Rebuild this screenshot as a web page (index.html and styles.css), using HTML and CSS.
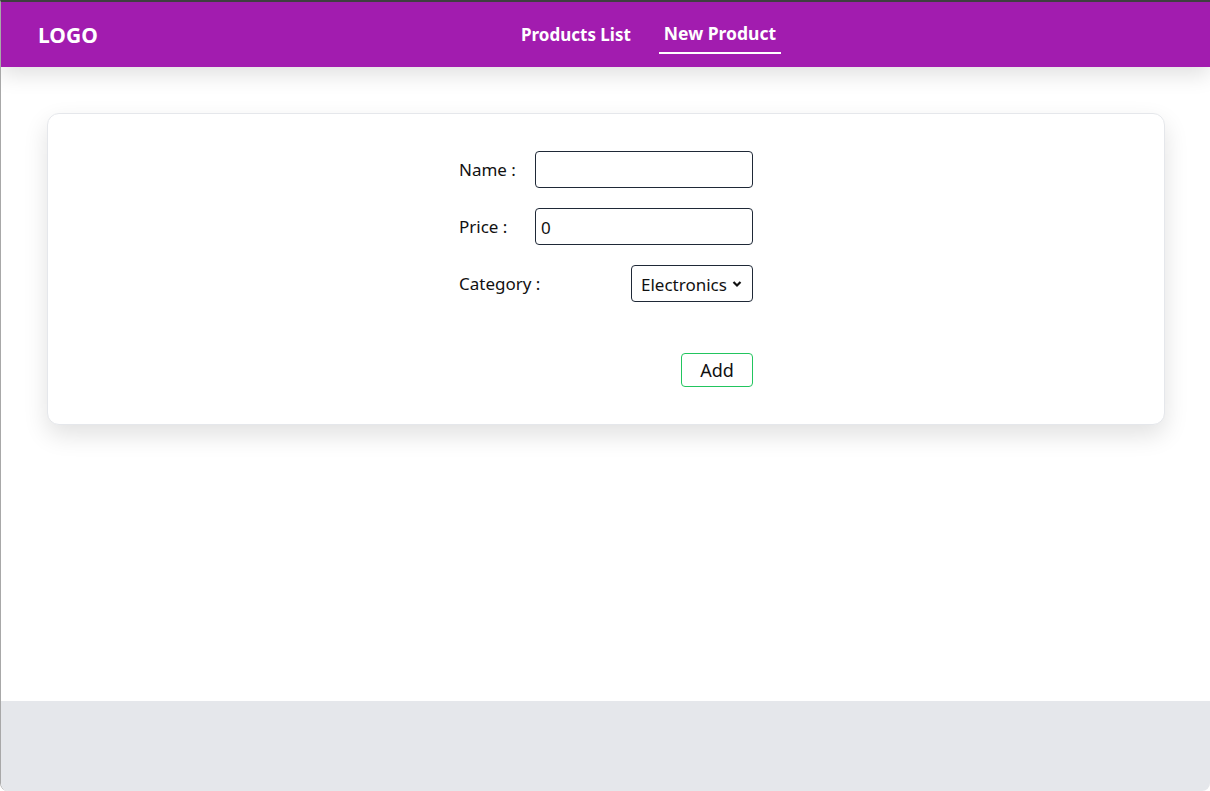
FILE: index.html
```html
<!DOCTYPE html>
<html lang="en">
<head>
<meta charset="utf-8">
<title>New Product</title>
<link rel="stylesheet" href="styles.css">
</head>
<body>
<div class="window">
  <header class="topbar">
    <div class="logo">LOGO</div>
    <nav class="nav">
      <a class="nav-link">Products List</a>
      <a class="nav-link active">New Product</a>
    </nav>
  </header>
  <main class="main">
    <section class="card">
      <form class="form">
        <div class="row">
          <label class="label">Name :</label>
          <input class="input" type="text" value="">
        </div>
        <div class="row">
          <label class="label">Price :</label>
          <input class="input" type="text" value="0">
        </div>
        <div class="row">
          <label class="label">Category :</label>
          <div class="select">
            <span>Electronics</span>
            <svg class="chev" width="10" height="8" viewBox="0 0 10 8"><path d="M1.5 2 L5 5.5 L8.5 2" fill="none" stroke="#111" stroke-width="2.2"/></svg>
          </div>
        </div>
        <div class="actions">
          <button class="btn" type="button">Add</button>
        </div>
      </form>
    </section>
  </main>
  <footer class="footer"></footer>
</div>
</body>
</html>
```

FILE: styles.css
```css
* { box-sizing: border-box; }
html, body { margin: 0; padding: 0; background: #ffffff; }
body {
  font-family: "Noto Sans", "Open Sans", sans-serif;
  color: #111827;
  height: 791px;
  overflow: hidden;
}
.window {
  height: 791px;
  display: flex;
  flex-direction: column;
  border-top: 2px solid #3f3f3f;
  border-left: 1px solid #a8a8a8;
  border-radius: 0 0 8px 8px;
  overflow: hidden;
  background: #ffffff;
}
.topbar {
  height: 65px;
  flex: none;
  background: #a21caf;
  display: flex;
  align-items: center;
  padding-left: 37px;
  position: relative;
  z-index: 2;
  box-shadow: 0 8px 20px rgba(0,0,0,0.12);
}
.logo {
  color: #fff;
  font-weight: 700;
  font-size: 21px;
  width: 483px;
}
.nav {
  display: flex;
  gap: 28px;
  align-items: center;
}
.nav-link {
  color: #fff;
  font-weight: 700;
  font-size: 17px;
  line-height: 24px;
  padding: 8px 5px 5px;
  border-bottom: 2px solid transparent;
}
.nav-link:first-child { padding-left: 0; padding-right: 0; }
.nav-link.active {
  font-size: 17.5px;
  border-bottom-color: #fff;
  padding-top: 6px;
  padding-bottom: 7px;
}
.main {
  flex: 1;
  padding: 46px 45px 0 46px;
}
.card {
  border: 1px solid #e5e7eb;
  border-radius: 12px;
  background: #fff;
  box-shadow: 0 10px 25px rgba(0,0,0,0.12);
  padding: 37px 0 37px;
  display: flex;
  justify-content: center;
}
.form {
  width: 294px;
  display: flex;
  flex-direction: column;
  gap: 20px;
}
.row {
  display: flex;
  justify-content: space-between;
  align-items: center;
}
.label { font-size: 17px; color: #111; }
.input {
  width: 218px;
  height: 37px;
  border: 1px solid #1f2937;
  border-radius: 4px;
  font-family: inherit;
  font-size: 17px;
  padding: 1px 5px 0;
  color: #111;
  outline: none;
}
.select {
  width: 122px;
  height: 37px;
  border: 1px solid #1f2937;
  border-radius: 4px;
  display: flex;
  align-items: center;
  padding: 1px 0 0 9px;
  gap: 5px;
  font-size: 17px;
  color: #111;
}
.actions {
  display: flex;
  justify-content: flex-end;
  padding-top: 31px;
}
.btn {
  width: 72px;
  height: 34px;
  border: 1px solid #22c55e;
  border-radius: 4px;
  background: #fff;
  font-family: inherit;
  font-size: 18px;
  color: #111;
  padding: 0;
}
.footer {
  height: 90px;
  flex: none;
  background: #e5e7eb;
}
```
